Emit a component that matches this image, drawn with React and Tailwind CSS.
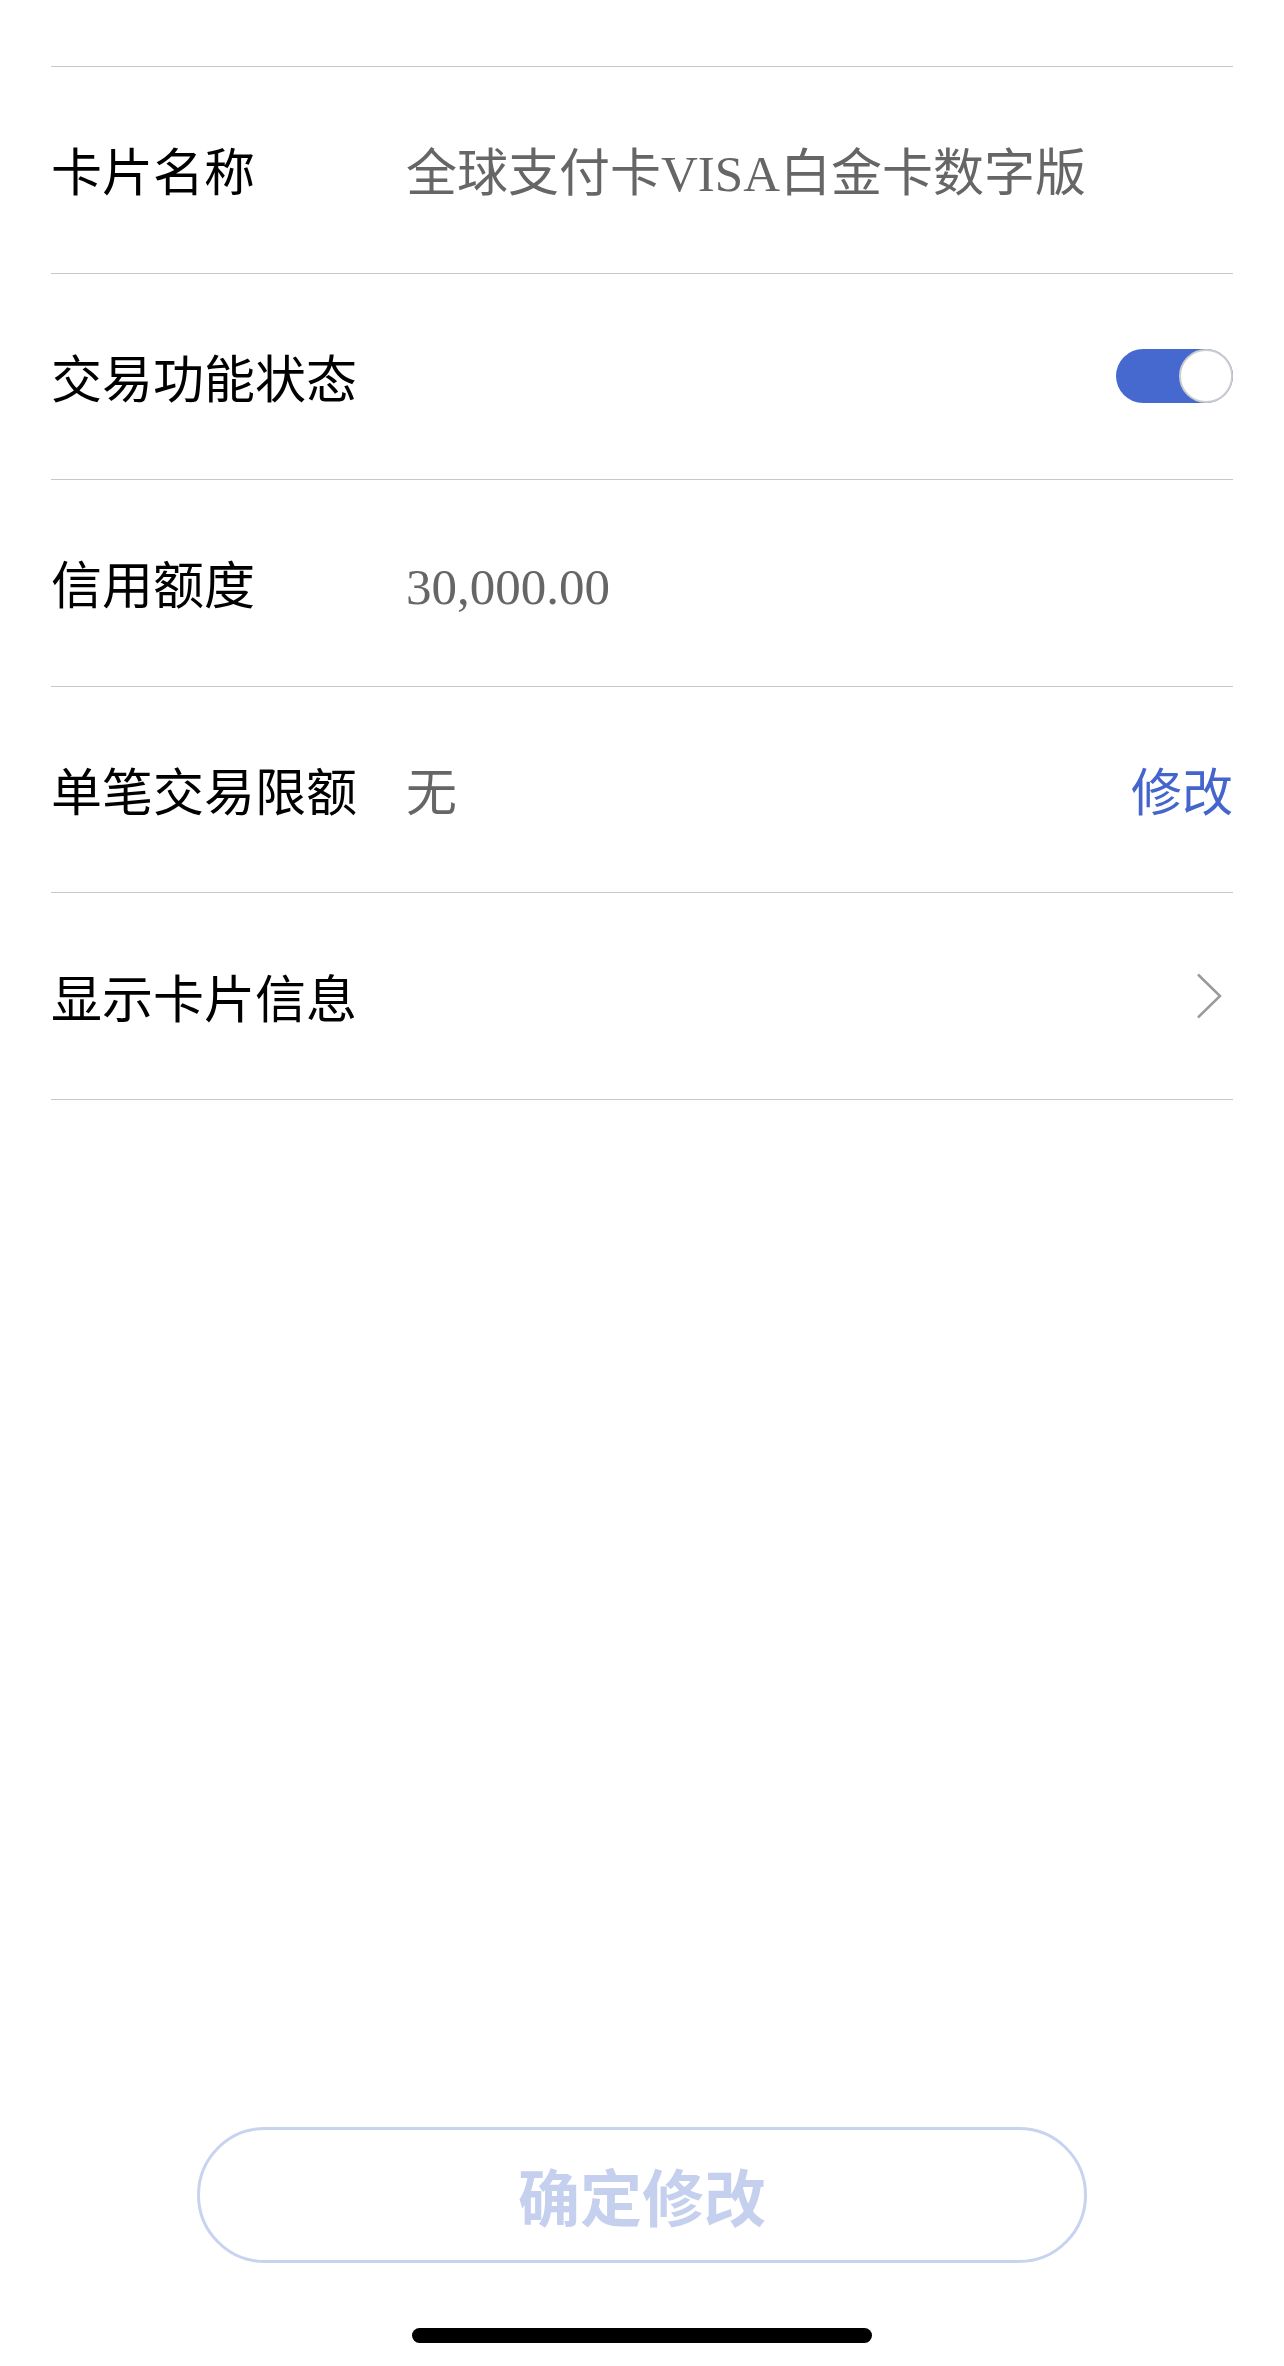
import React, { useState } from 'react';

const labelFont = { fontFamily: '"Noto Sans CJK SC", "Noto Sans", sans-serif' };

function Row({ label, children }) {
  return (
    <div className="h-[206.6px] flex items-center border-b border-[#c8c8c8]">
      <div className="w-[355px] shrink-0 text-[51px] leading-none text-black" style={labelFont}>
        {label}
      </div>
      <div className="flex-1 flex items-center">{children}</div>
    </div>
  );
}

function Value({ children }) {
  return (
    <span className="mt-[9px] text-[51px] leading-none text-[#666666] font-['Liberation_Serif','Noto_Sans_CJK_SC',serif]">
      {children}
    </span>
  );
}

function Toggle({ on, onChange }) {
  return (
    <button
      onClick={() => onChange(!on)}
      className={
        'w-[117px] h-[54px] rounded-full flex items-center ' +
        (on ? 'bg-[#4669cf] justify-end' : 'bg-[#e5e5e5] justify-start')
      }
    >
      <span className="w-[54px] h-[54px] rounded-full bg-white border-2 border-[#cdcdcd] box-border" />
    </button>
  );
}

export default function App() {
  const [enabled, setEnabled] = useState(true);

  return (
    <div className="h-[2366px] bg-white flex flex-col">
      <div className="pt-[66px] px-[51px]">
        <div className="border-t border-[#c8c8c8]">
          <Row label="卡片名称">
            <Value>全球支付卡VISA白金卡数字版</Value>
          </Row>
          <Row label="交易功能状态">
            <div className="flex-1 flex justify-end">
              <Toggle on={enabled} onChange={setEnabled} />
            </div>
          </Row>
          <Row label="信用额度">
            <Value>30,000.00</Value>
          </Row>
          <Row label="单笔交易限额">
            <Value>无</Value>
            <button
              className="ml-auto text-[51px] leading-none text-[#4466cc]"
              style={labelFont}
            >
              修改
            </button>
          </Row>
          <Row label="显示卡片信息">
            <div className="flex-1 flex justify-end pr-[11px]">
              <svg width="26" height="46" viewBox="0 0 26 46" fill="none">
                <path d="M2 1.5 L24 23 L2 44.5" stroke="#9a9a9a" strokeWidth="2.5" />
              </svg>
            </div>
          </Row>
        </div>
      </div>

      <div className="flex-1" />

      <button
        className="mx-auto w-[890px] h-[136px] rounded-full border-[3px] border-[#c8d3ef] text-[62px] font-bold leading-none text-[#c5d0ee]"
        style={labelFont}
      >
        确定修改
      </button>

      <div className="mt-[65px] mb-[23px] mx-auto w-[460px] h-[15px] rounded-full bg-black" />
    </div>
  );
}
